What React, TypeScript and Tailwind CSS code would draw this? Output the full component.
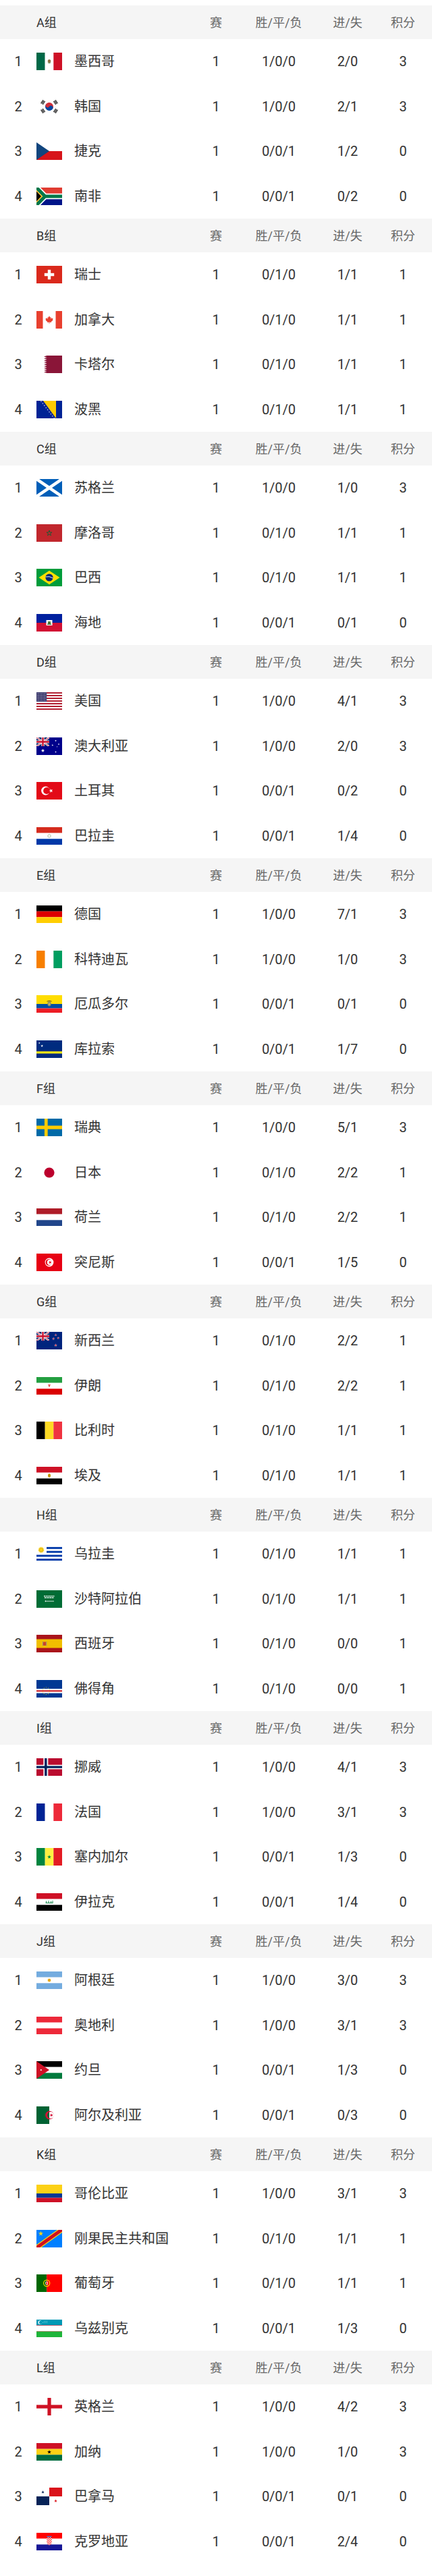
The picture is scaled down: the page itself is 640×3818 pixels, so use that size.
import type { ReactNode } from 'react';

type Row = [string, string, string, string, number];

interface Group {
  name: string;
  teams: Row[];
}

const groups: Group[] = [
  { name: 'A', teams: [['墨西哥', 'mx', '1/0/0', '2/0', 3], ['韩国', 'kr', '1/0/0', '2/1', 3], ['捷克', 'cz', '0/0/1', '1/2', 0], ['南非', 'za', '0/0/1', '0/2', 0]] },
  { name: 'B', teams: [['瑞士', 'ch', '0/1/0', '1/1', 1], ['加拿大', 'ca', '0/1/0', '1/1', 1], ['卡塔尔', 'qa', '0/1/0', '1/1', 1], ['波黑', 'ba', '0/1/0', '1/1', 1]] },
  { name: 'C', teams: [['苏格兰', 'sco', '1/0/0', '1/0', 3], ['摩洛哥', 'ma', '0/1/0', '1/1', 1], ['巴西', 'br', '0/1/0', '1/1', 1], ['海地', 'ht', '0/0/1', '0/1', 0]] },
  { name: 'D', teams: [['美国', 'us', '1/0/0', '4/1', 3], ['澳大利亚', 'au', '1/0/0', '2/0', 3], ['土耳其', 'tr', '0/0/1', '0/2', 0], ['巴拉圭', 'py', '0/0/1', '1/4', 0]] },
  { name: 'E', teams: [['德国', 'de', '1/0/0', '7/1', 3], ['科特迪瓦', 'ci', '1/0/0', '1/0', 3], ['厄瓜多尔', 'ec', '0/0/1', '0/1', 0], ['库拉索', 'cw', '0/0/1', '1/7', 0]] },
  { name: 'F', teams: [['瑞典', 'se', '1/0/0', '5/1', 3], ['日本', 'jp', '0/1/0', '2/2', 1], ['荷兰', 'nl', '0/1/0', '2/2', 1], ['突尼斯', 'tn', '0/0/1', '1/5', 0]] },
  { name: 'G', teams: [['新西兰', 'nz', '0/1/0', '2/2', 1], ['伊朗', 'ir', '0/1/0', '2/2', 1], ['比利时', 'be', '0/1/0', '1/1', 1], ['埃及', 'eg', '0/1/0', '1/1', 1]] },
  { name: 'H', teams: [['乌拉圭', 'uy', '0/1/0', '1/1', 1], ['沙特阿拉伯', 'sa', '0/1/0', '1/1', 1], ['西班牙', 'es', '0/1/0', '0/0', 1], ['佛得角', 'cv', '0/1/0', '0/0', 1]] },
  { name: 'I', teams: [['挪威', 'no', '1/0/0', '4/1', 3], ['法国', 'fr', '1/0/0', '3/1', 3], ['塞内加尔', 'sn', '0/0/1', '1/3', 0], ['伊拉克', 'iq', '0/0/1', '1/4', 0]] },
  { name: 'J', teams: [['阿根廷', 'ar', '1/0/0', '3/0', 3], ['奥地利', 'at', '1/0/0', '3/1', 3], ['约旦', 'jo', '0/0/1', '1/3', 0], ['阿尔及利亚', 'dz', '0/0/1', '0/3', 0]] },
  { name: 'K', teams: [['哥伦比亚', 'co', '1/0/0', '3/1', 3], ['刚果民主共和国', 'cd', '0/1/0', '1/1', 1], ['葡萄牙', 'pt', '0/1/0', '1/1', 1], ['乌兹别克', 'uz', '0/0/1', '1/3', 0]] },
  { name: 'L', teams: [['英格兰', 'eng', '1/0/0', '4/2', 3], ['加纳', 'gh', '1/0/0', '1/0', 3], ['巴拿马', 'pa', '0/0/1', '0/1', 0], ['克罗地亚', 'hr', '0/0/1', '2/4', 0]] },
];

// star / sunburst polygon points
const starPts = (cx: number, cy: number, R: number, r = R * 0.4, n = 5, rot = -90) => {
  const pts: string[] = [];
  for (let i = 0; i < n * 2; i++) {
    const rad = i % 2 === 0 ? R : r;
    const a = ((rot + (i * 180) / n) * Math.PI) / 180;
    pts.push(`${(cx + rad * Math.cos(a)).toFixed(2)},${(cy + rad * Math.sin(a)).toFixed(2)}`);
  }
  return pts.join(' ');
};

const hTri = (a: string, b: string, c: string) => (
  <>
    <rect width="38" height="8.7" fill={a} />
    <rect y="8.7" width="38" height="8.6" fill={b} />
    <rect y="17.3" width="38" height="8.7" fill={c} />
  </>
);

const vTri = (a: string, b: string, c: string) => (
  <>
    <rect width="12.7" height="26" fill={a} />
    <rect x="12.7" width="12.6" height="26" fill={b} />
    <rect x="25.3" width="12.7" height="26" fill={c} />
  </>
);

const unionJack = (id: string) => (
  <>
    <clipPath id={id}>
      <rect width="19" height="13" />
    </clipPath>
    <g clipPath={`url(#${id})`}>
      <rect width="19" height="13" fill="#012169" />
      <path d="M0,0 L19,13 M19,0 L0,13" stroke="#fff" strokeWidth="2.6" />
      <path d="M0,0 L19,13 M19,0 L0,13" stroke="#C8102E" strokeWidth="0.9" />
      <path d="M9.5,0 V13 M0,6.5 H19" stroke="#fff" strokeWidth="4.2" />
      <path d="M9.5,0 V13 M0,6.5 H19" stroke="#C8102E" strokeWidth="2.4" />
    </g>
  </>
);

const trigram = (cx: number, cy: number, angle: number) => (
  <g transform={`translate(${cx} ${cy}) rotate(${angle})`} fill="#000">
    <rect x="-3" y="-2.2" width="6" height="1" />
    <rect x="-3" y="-0.5" width="6" height="1" />
    <rect x="-3" y="1.2" width="6" height="1" />
  </g>
);

const usStars = () => {
  const out: ReactNode[] = [];
  for (let r = 0; r < 9; r++) {
    const n = r % 2 === 0 ? 6 : 5;
    for (let c = 0; c < n; c++) {
      const x = r % 2 === 0 ? (15.2 / 12) * (2 * c + 1) : (15.2 / 12) * (2 * c + 2);
      out.push(<circle key={`${r}-${c}`} cx={x} cy={1.4 * (r + 1)} r="0.42" fill="#fff" />);
    }
  }
  return out;
};

const cvStars = () =>
  Array.from({ length: 10 }, (_, i) => {
    const a = ((i * 36 - 90) * Math.PI) / 180;
    return <polygon key={i} points={starPts(14.3 + 5.2 * Math.cos(a), 16.2 + 5.2 * Math.sin(a), 0.9)} fill="#F7D116" />;
  });

const hrChecks = () => {
  const out: ReactNode[] = [];
  for (let r = 0; r < 8; r++) {
    for (let c = 0; c < 5; c++) {
      out.push(
        <rect key={`${r}-${c}`} x={15.2 + c * 1.52} y={6.5 + r * 1.52} width="1.52" height="1.52" fill={(r + c) % 2 === 0 ? '#FF0000' : '#fff'} />,
      );
    }
  }
  return out;
};

const flags: Record<string, ReactNode> = {
  mx: (
    <>
      {vTri('#006847', '#fff', '#CE1126')}
      <ellipse cx="19" cy="12.6" rx="2.3" ry="2.5" fill="#8f6e3f" />
      <path d="M16.8,14.8 Q19,16.6 21.2,14.8" stroke="#4d7d3a" strokeWidth="0.8" fill="none" />
    </>
  ),
  kr: (
    <>
      <g transform="rotate(33.69 19 13)">
        <path d="M13,13 A6,6 0 0 1 25,13 Z" fill="#CD2E3A" />
        <path d="M13,13 A6,6 0 0 0 25,13 Z" fill="#0047A0" />
        <circle cx="16" cy="13" r="3" fill="#CD2E3A" />
        <circle cx="22" cy="13" r="3" fill="#0047A0" />
      </g>
      {trigram(9.6, 6.6, -56.3)}
      {trigram(28.4, 19.4, -56.3)}
      {trigram(28.4, 6.6, 56.3)}
      {trigram(9.6, 19.4, 56.3)}
    </>
  ),
  cz: (
    <>
      <rect y="13" width="38" height="13" fill="#D7141A" />
      <polygon points="0,0 19,13 0,26" fill="#11457E" />
    </>
  ),
  za: (
    <svg width="38" height="26" viewBox="0 0 90 60" preserveAspectRatio="none">
      <rect width="90" height="30" fill="#E03C31" />
      <rect y="30" width="90" height="30" fill="#001489" />
      <path d="M0,0 L30,30 L0,60 M30,30 H90" stroke="#fff" strokeWidth="20" fill="none" />
      <path d="M0,0 L30,30 L0,60 M30,30 H90" stroke="#007749" strokeWidth="12" fill="none" />
      <polygon points="0,8.5 21.5,30 0,51.5" fill="#FFB81C" />
      <polygon points="0,13.5 16.5,30 0,46.5" fill="#000" />
    </svg>
  ),
  ch: (
    <>
      <rect width="38" height="26" fill="#DA291C" />
      <rect x="16.8" y="5.8" width="4.4" height="14.4" fill="#fff" />
      <rect x="11.8" y="10.8" width="14.4" height="4.4" fill="#fff" />
    </>
  ),
  ca: (
    <>
      <rect width="9.5" height="26" fill="#E8402F" />
      <rect x="28.5" width="9.5" height="26" fill="#E8402F" />
      <polygon
        transform="translate(19 12.6)"
        fill="#E8402F"
        points="0,-5.6 1.2,-3.2 2.5,-3.9 2,-0.8 4,-2.5 4.6,-1.3 5.6,-1.5 4.9,0.8 5.5,1.2 2.6,3.3 2.9,4.3 0.35,3.8 0.35,6.2 -0.35,6.2 -0.35,3.8 -2.9,4.3 -2.6,3.3 -5.5,1.2 -4.9,0.8 -5.6,-1.5 -4.6,-1.3 -4,-2.5 -2,-0.8 -2.5,-3.9 -1.2,-3.2"
      />
    </>
  ),
  qa: (
    <polygon
      fill="#8A1538"
      points={`38,0 38,26 ${Array.from({ length: 9 }, (_, i) => {
        const y0 = 26 - i * (26 / 9);
        return `15.5,${y0.toFixed(2)} 11,${(y0 - 13 / 9).toFixed(2)}`;
      }).join(' ')} 15.5,0`}
    />
  ),
  ba: (
    <>
      <rect width="38" height="26" fill="#002395" />
      <polygon points="10,0 29,0 29,26" fill="#FECB00" />
      {Array.from({ length: 9 }, (_, i) => (
        <polygon key={i} points={starPts(7 + i * 2.4, 1 + i * 3.1, 1.1)} fill="#fff" />
      ))}
    </>
  ),
  sco: (
    <>
      <rect width="38" height="26" fill="#005EB8" />
      <path d="M0,0 L38,26 M38,0 L0,26" stroke="#fff" strokeWidth="4.6" />
    </>
  ),
  ma: (
    <>
      <rect width="38" height="26" fill="#C1272D" />
      <polygon points={starPts(19, 13.3, 4.2, 1.6)} fill="none" stroke="#006233" strokeWidth="0.8" />
    </>
  ),
  br: (
    <>
      <rect width="38" height="26" fill="#009C3B" />
      <polygon points="3.5,13 19,2.8 34.5,13 19,23.2" fill="#FFDF00" />
      <circle cx="19" cy="13" r="5.6" fill="#002776" />
      <path d="M13.6,12 Q19,10.4 24.5,13.9" stroke="#fff" strokeWidth="0.9" fill="none" />
    </>
  ),
  ht: (
    <>
      <rect width="38" height="13" fill="#00209F" />
      <rect y="13" width="38" height="13" fill="#D21034" />
      <rect x="14.5" y="9" width="9" height="8" fill="#fff" />
      <rect x="17" y="11" width="4" height="4" fill="#4a7c3a" />
      <rect x="16" y="14.6" width="6" height="1.2" fill="#2b6a2b" />
    </>
  ),
  us: (
    <>
      {Array.from({ length: 13 }, (_, i) => (
        <rect key={i} y={i * 2} width="38" height="2" fill={i % 2 === 0 ? '#B22234' : '#fff'} />
      ))}
      <rect width="15.2" height="14" fill="#3C3B6E" />
      {usStars()}
    </>
  ),
  au: (
    <>
      <rect width="38" height="26" fill="#00008B" />
      {unionJack('uj-au')}
      <polygon points={starPts(9.5, 19.5, 2.8, 1.2, 7)} fill="#fff" />
      <polygon points={starPts(28.5, 21.5, 1.4, 0.6, 7)} fill="#fff" />
      <polygon points={starPts(23.8, 11.5, 1.4, 0.6, 7)} fill="#fff" />
      <polygon points={starPts(28.5, 4.8, 1.4, 0.6, 7)} fill="#fff" />
      <polygon points={starPts(33, 10, 1.4, 0.6, 7)} fill="#fff" />
      <polygon points={starPts(30.6, 13.8, 0.8, 0.35)} fill="#fff" />
    </>
  ),
  tr: (
    <>
      <rect width="38" height="26" fill="#E30A17" />
      <circle cx="13.5" cy="13" r="6.4" fill="#fff" />
      <circle cx="15.2" cy="13" r="5.1" fill="#E30A17" />
      <polygon points={starPts(21.6, 13, 3.1, 1.25, 5, 180)} fill="#fff" />
    </>
  ),
  py: (
    <>
      {hTri('#D52B1E', '#fff', '#0038A8')}
      <circle cx="19" cy="13" r="2.2" fill="none" stroke="#8ca37a" strokeWidth="0.7" />
    </>
  ),
  de: hTri('#000', '#DD0000', '#FFCE00'),
  ci: vTri('#F77F00', '#fff', '#009E60'),
  ec: (
    <>
      <rect width="38" height="13" fill="#FFDD00" />
      <rect y="13" width="38" height="6.5" fill="#034EA2" />
      <rect y="19.5" width="38" height="6.5" fill="#ED1C24" />
      <ellipse cx="19" cy="13" rx="2.6" ry="3.4" fill="#7d8a6a" />
      <path d="M15.5,9.2 Q19,7.6 22.5,9.2" stroke="#5a4a2a" strokeWidth="1" fill="none" />
      <rect x="17.6" y="11.4" width="2.8" height="3.4" fill="#c9b26a" />
    </>
  ),
  cw: (
    <>
      <rect width="38" height="26" fill="#002B7F" />
      <rect y="16.25" width="38" height="3.25" fill="#F9E814" />
      <polygon points={starPts(4.3, 4, 1.4)} fill="#fff" />
      <polygon points={starPts(8.2, 8.2, 2)} fill="#fff" />
    </>
  ),
  se: (
    <>
      <rect width="38" height="26" fill="#006AA7" />
      <rect x="11.9" width="4.75" height="26" fill="#FECC00" />
      <rect y="10.4" width="38" height="5.2" fill="#FECC00" />
    </>
  ),
  jp: <circle cx="19" cy="13" r="7.6" fill="#BC002D" />,
  nl: hTri('#AE1C28', '#fff', '#21468B'),
  tn: (
    <>
      <rect width="38" height="26" fill="#E70013" />
      <circle cx="19" cy="13" r="6.4" fill="#fff" />
      <circle cx="18.4" cy="13" r="4.8" fill="#E70013" />
      <circle cx="19.7" cy="13" r="3.9" fill="#fff" />
      <polygon points={starPts(20.2, 13, 2.6, 1.05, 5, 180)} fill="#E70013" />
    </>
  ),
  nz: (
    <>
      <rect width="38" height="26" fill="#00247D" />
      {unionJack('uj-nz')}
      {[
        [28.5, 19.8, 1.9],
        [25.2, 10.2, 1.6],
        [32.3, 9.2, 1.5],
        [28.5, 4.5, 1.4],
      ].map(([x, y, s], i) => (
        <g key={i}>
          <polygon points={starPts(x, y, s + 0.5)} fill="#fff" />
          <polygon points={starPts(x, y, s)} fill="#CC142B" />
        </g>
      ))}
    </>
  ),
  ir: (
    <>
      {hTri('#239F40', '#fff', '#DA0000')}
      <path d="M17.6,11 Q19,15.6 20.4,11 M19,10.6 V15" stroke="#DA0000" strokeWidth="0.8" fill="none" />
    </>
  ),
  be: vTri('#000', '#FDDA24', '#EF3340'),
  eg: (
    <>
      {hTri('#CE1126', '#fff', '#000')}
      <ellipse cx="19" cy="13" rx="2" ry="2.8" fill="#C09300" />
    </>
  ),
  uy: (
    <>
      {[1, 3, 5, 7].map((i) => (
        <rect key={i} x={i < 5 ? 15 : 0} y={i * (26 / 9)} width={i < 5 ? 23 : 38} height={26 / 9} fill="#0038A8" />
      ))}
      <polygon points={starPts(7, 7.2, 5.2, 3.2, 16)} fill="#FCD116" />
      <circle cx="7" cy="7.2" r="2.7" fill="#FCD116" stroke="#8a6d1a" strokeWidth="0.3" />
    </>
  ),
  sa: (
    <>
      <rect width="38" height="26" fill="#006C35" />
      <path d="M11,8.6 H27 M12,11 H26" stroke="#fff" strokeWidth="1.3" strokeDasharray="2 0.7" fill="none" />
      <path d="M12.5,16.2 H26" stroke="#fff" strokeWidth="0.8" />
      <rect x="13.2" y="15.2" width="0.8" height="2" fill="#fff" />
    </>
  ),
  es: (
    <>
      <rect width="38" height="26" fill="#AA151B" />
      <rect y="6.5" width="38" height="13" fill="#F1BF00" />
      <rect x="10" y="10.5" width="4.2" height="5.4" rx="1" fill="#c8452c" />
      <rect x="9" y="10" width="1" height="6.4" fill="#9a8a7a" />
      <rect x="14.2" y="10" width="1" height="6.4" fill="#9a8a7a" />
    </>
  ),
  cv: (
    <>
      <rect width="38" height="26" fill="#003893" />
      <rect y="13" width="38" height="6.5" fill="#fff" />
      <rect y="15.2" width="38" height="2.15" fill="#CF2027" />
      {cvStars()}
    </>
  ),
  no: (
    <>
      <rect width="38" height="26" fill="#BA0C2F" />
      <rect x="10.4" width="6.9" height="26" fill="#fff" />
      <rect y="9.75" width="38" height="6.5" fill="#fff" />
      <rect x="12.1" width="3.45" height="26" fill="#00205B" />
      <rect y="11.4" width="38" height="3.25" fill="#00205B" />
    </>
  ),
  fr: vTri('#002395', '#fff', '#ED2939'),
  sn: (
    <>
      {vTri('#00853F', '#FDEF42', '#E31B23')}
      <polygon points={starPts(19, 13.3, 3)} fill="#00853F" />
    </>
  ),
  iq: (
    <>
      {hTri('#CE1126', '#fff', '#000')}
      <path d="M13.5,14.5 H24.5 M14.5,11.5 V14.5 M18,11 V14.5 M21.5,11.8 V14.5 M24,11 V14.5" stroke="#007A3D" strokeWidth="0.9" fill="none" />
    </>
  ),
  ar: (
    <>
      {hTri('#74ACDF', '#fff', '#74ACDF')}
      <polygon points={starPts(19, 13, 3, 1.8, 12)} fill="#F6B40E" />
      <circle cx="19" cy="13" r="1.5" fill="#F6B40E" stroke="#85340A" strokeWidth="0.2" />
    </>
  ),
  at: hTri('#ED2939', '#fff', '#ED2939'),
  jo: (
    <>
      {hTri('#000', '#fff', '#007A3D')}
      <polygon points="0,0 19,13 0,26" fill="#CE1126" />
      <polygon points={starPts(6.8, 13, 1.6, 0.7, 7)} fill="#fff" />
    </>
  ),
  dz: (
    <>
      <rect width="19" height="26" fill="#006233" />
      <mask id="dz-m">
        <rect width="38" height="26" fill="#fff" />
        <circle cx="21" cy="13" r="5" fill="#000" />
      </mask>
      <circle cx="19.4" cy="13" r="6.2" fill="#D21034" mask="url(#dz-m)" />
      <polygon points={starPts(22.2, 13, 2.7, 1.1, 5, 180)} fill="#D21034" />
    </>
  ),
  co: (
    <>
      <rect width="38" height="13" fill="#FCD116" />
      <rect y="13" width="38" height="6.5" fill="#003893" />
      <rect y="19.5" width="38" height="6.5" fill="#CE1126" />
    </>
  ),
  cd: (
    <>
      <rect width="38" height="26" fill="#007FFF" />
      <path d="M-2,28 L40,-2" stroke="#F7D618" strokeWidth="7.6" />
      <path d="M-2,28 L40,-2" stroke="#CE1021" strokeWidth="5" />
      <polygon points={starPts(6.5, 5.6, 3.8)} fill="#F7D618" />
    </>
  ),
  pt: (
    <>
      <rect width="15.2" height="26" fill="#006600" />
      <rect x="15.2" width="22.8" height="26" fill="#FF0000" />
      <circle cx="15.2" cy="13" r="4.6" fill="none" stroke="#FFE000" strokeWidth="1.1" />
      <rect x="13.4" y="10.8" width="3.6" height="4.4" rx="0.8" fill="#fff" />
      <rect x="14.2" y="11.6" width="2" height="2.8" fill="#FF0000" />
    </>
  ),
  uz: (
    <>
      <rect width="38" height="8.4" fill="#0099B5" />
      <rect y="8.4" width="38" height="0.6" fill="#CE1126" />
      <rect y="17" width="38" height="0.6" fill="#CE1126" />
      <rect y="17.6" width="38" height="8.4" fill="#1EB53A" />
      <circle cx="5.4" cy="4.2" r="2.9" fill="#fff" />
      <circle cx="6.4" cy="4.2" r="2.5" fill="#0099B5" />
      {[9.5, 11.5, 13.5, 15.5].map((x) => (
        <circle key={x} cx={x} cy="4.2" r="0.45" fill="#fff" />
      ))}
      {[11.5, 13.5, 15.5].map((x) => (
        <circle key={x} cx={x} cy="2.2" r="0.45" fill="#fff" />
      ))}
    </>
  ),
  eng: (
    <>
      <rect x="16.4" width="5.2" height="26" fill="#CE1124" />
      <rect y="10.4" width="38" height="5.2" fill="#CE1124" />
    </>
  ),
  gh: (
    <>
      {hTri('#CE1126', '#FCD116', '#006B3F')}
      <polygon points={starPts(19, 13.3, 3.1)} fill="#000" />
    </>
  ),
  pa: (
    <>
      <rect x="19" width="19" height="13" fill="#DA121A" />
      <rect y="13" width="19" height="13" fill="#072357" />
      <polygon points={starPts(9.5, 6.7, 2.4)} fill="#072357" />
      <polygon points={starPts(28.5, 19.7, 2.4)} fill="#DA121A" />
    </>
  ),
  hr: (
    <>
      {hTri('#FF0000', '#fff', '#171796')}
      <clipPath id="hr-c">
        <path d="M15.2,6.5 H22.8 V13.6 Q22.8,17.6 19,18.4 Q15.2,17.6 15.2,13.6 Z" />
      </clipPath>
      <g clipPath="url(#hr-c)">{hrChecks()}</g>
      <rect x="15.4" y="4.8" width="7.2" height="1.5" fill="#3a7bd5" />
    </>
  ),
};

function Flag({ code }: { code: string }) {
  return (
    <svg width="38" height="26" viewBox="0 0 38 26" className="block shrink-0">
      {flags[code]}
    </svg>
  );
}

export default function App() {
  return (
    <div className="w-[640px] bg-white pt-[8px] pb-[17px] [font-family:Roboto,'Noto_Sans_CJK_SC',sans-serif]">
      {groups.map((group) => (
        <section key={group.name}>
          {/* group header */}
          <div className="flex h-[50px] items-center bg-[#f5f5f5] text-[18px] text-[#666]">
            <div className="w-[290px] pl-[54px] text-[#333]">{group.name}组</div>
            <div className="w-[60px] text-center">赛</div>
            <div className="w-[126px] text-center">胜/平/负</div>
            <div className="w-[78px] text-center">进/失</div>
            <div className="w-[86px] text-center">积分</div>
          </div>

          {group.teams.map(([name, flag, wdl, goals, pts], i) => (
            <div key={name} className="flex h-[66.5px] items-center text-[20px] text-[#333]">
              <div className="w-[54px] text-center">{i + 1}</div>
              <Flag code={flag} />
              <div className="ml-[18px] w-[180px] whitespace-nowrap">{name}</div>
              <div className="w-[60px] text-center">1</div>
              <div className="w-[126px] text-center">{wdl}</div>
              <div className="w-[78px] text-center">{goals}</div>
              <div className="w-[86px] text-center">{pts}</div>
            </div>
          ))}
        </section>
      ))}
    </div>
  );
}
